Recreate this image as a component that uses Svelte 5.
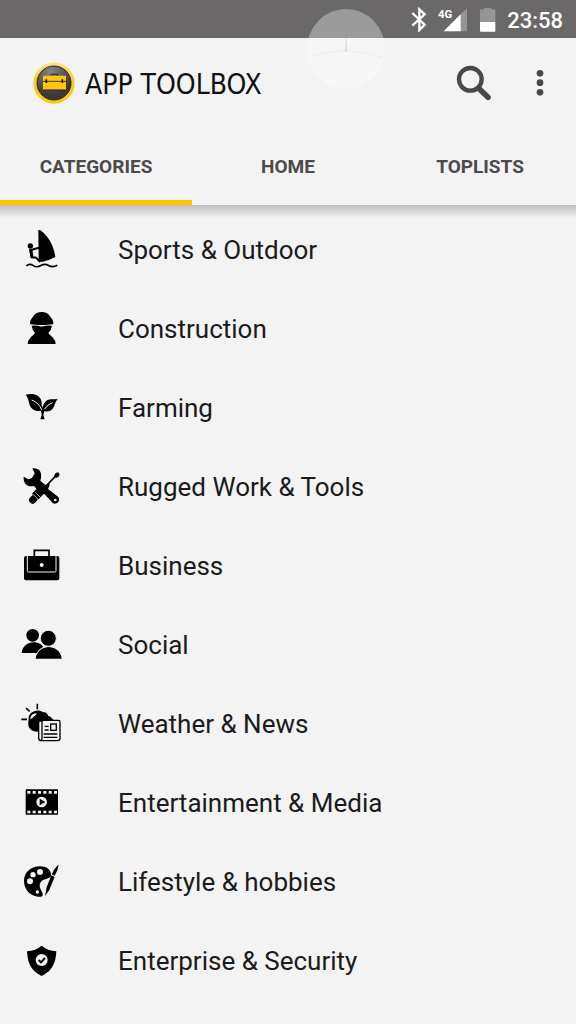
<script lang="ts">
  type Tab = 'categories' | 'home' | 'toplists';

  const tabs: { id: Tab; label: string }[] = [
    { id: 'categories', label: 'CATEGORIES' },
    { id: 'home', label: 'HOME' },
    { id: 'toplists', label: 'TOPLISTS' },
  ];

  const categories = [
    { icon: 'sports', label: 'Sports & Outdoor', box: '0 -3 210 180' },
    { icon: 'construction', label: 'Construction', box: '0 -6 210 180' },
    { icon: 'farming', label: 'Farming', box: '0 -7 210 180' },
    { icon: 'tools', label: 'Rugged Work & Tools', box: '0 230 210 180' },
    { icon: 'business', label: 'Business', box: '0 -12 210 180' },
    { icon: 'social', label: 'Social', box: '0 225 210 180' },
    { icon: 'weather', label: 'Weather & News', box: '0 -3 210 180' },
    { icon: 'media', label: 'Entertainment & Media', box: '0 -20 210 180' },
    { icon: 'lifestyle', label: 'Lifestyle & hobbies', box: '0 218 210 180' },
    { icon: 'security', label: 'Enterprise & Security', box: '0 3 210 180' },
  ];

  let active = $state<Tab>('categories');
</script>

<div class="app">
  <div class="status">
    <svg width="16" height="25" viewBox="366 20 48 75" aria-label="Bluetooth">
      <path d="M370 38l37 35-16 16V27l16 15-37 34" fill="none" stroke="#fff" stroke-width="7" />
    </svg>
    <svg width="30" height="25" viewBox="444 20 90 75" aria-label="Signal">
      <path d="M531 24v69h-70z" fill="#969595" />
      <path d="M512 42v51h-51z" fill="#fff" />
      <text x="444" y="53" class="network">4G</text>
    </svg>
    <svg width="17" height="25" viewBox="567 18 51 75" aria-label="Battery">
      <path d="M570 28q0-3 3-3h9v-4h22v4h9q3 0 3 3v36h-46z" fill="#969595" />
      <path d="M570 63h46v26q0 3-3 3h-40q-3 0-3-3z" fill="#fff" />
    </svg>
    <time>23:58</time>
  </div>

  <div class="touch" aria-hidden="true">
    <svg viewBox="0 0 234 234">
      <path d="M8 144q110-38 218 2" fill="none" stroke="#777" stroke-opacity=".05" stroke-width="5" />
      <path d="M84 95l31 32M151 96l-32 31" fill="none" stroke="#444" stroke-opacity=".07" stroke-width="2" />
      <path d="M115 127l2-57 3 57z" fill="#444" fill-opacity=".2" />
    </svg>
  </div>

  <header>
    <svg class="logo" width="42" height="42" viewBox="99 66 126 126" aria-hidden="true">
      <defs>
        <linearGradient id="ring" x1="0" y1="0" x2="0" y2="1">
          <stop offset="0" stop-color="#ffe28a" />
          <stop offset=".35" stop-color="#fbd03c" />
          <stop offset=".7" stop-color="#ffc60c" />
        </linearGradient>
        <radialGradient id="face" cx=".4" cy=".15" r=".7">
          <stop offset="0" stop-color="#858585" />
          <stop offset="1" stop-color="#3b3838" />
        </radialGradient>
      </defs>
      <circle cx="162" cy="129" r="62" fill="url(#ring)" />
      <circle cx="162" cy="129" r="51" fill="url(#face)" stroke="#2d2920" stroke-width="3" />
      <path d="M153 107v-4h20v4" fill="none" stroke="#222" stroke-width="3" />
      <rect x="129" y="107" width="69" height="43" rx="2" fill="#ffc515" />
      <path d="M129 124h69" stroke="#4a3a0c" stroke-width="3" />
      <path d="M139 118v11M187 118v11" stroke="#221c0c" stroke-width="5" />
      <path d="M131 150h65" stroke="#1e1c1c" stroke-width="3" />
    </svg>
    <h1>APP TOOLBOX</h1>
    <button class="search" aria-label="Search">
      <svg width="36" height="36" viewBox="498 195 108 108">
        <circle cx="541" cy="238" r="34" fill="none" stroke="#484848" stroke-width="13" />
        <path d="M566 265l28 27" stroke="#484848" stroke-width="17" stroke-linecap="round" />
      </svg>
    </button>
    <button class="more" aria-label="More options">
      <svg width="8" height="28" viewBox="740 208 24 84">
        <circle cx="752" cy="221" r="10" />
        <circle cx="752" cy="249" r="10" />
        <circle cx="752" cy="278" r="10" />
      </svg>
    </button>
  </header>

  <nav>
    {#each tabs as tab (tab.id)}
      <button class:active={active === tab.id} onclick={() => (active = tab.id)}>{tab.label}</button>
    {/each}
  </nav>

  <ul>
    {#each categories as category (category.icon)}
      <li>
        <button>
          <svg class="icon" width="70" height="60" viewBox={category.box} aria-hidden="true">
            {#if category.icon === 'sports'}
              <path d="M85 27l6 1c22 15 40 44 45 80q-20 11-41 15l-9-7z" />
              <circle cx="61" cy="75" r="8" />
              <path d="M61 88l4 21 13 1 13 13M63 87l24-7" class="line" stroke-width="6" />
              <path d="M57 84l10 1 3 22-8 2z" />
              <path d="M49 135c8-8 14-6 21-1s15 4 24-1 16-3 23 1 15 4 25-1" class="line" stroke-width="5" />
            {:else if category.icon === 'construction'}
              <path d="M61 70c-3-5 0-14 8-23 6-10 15-14 26-14s20 4 26 14c8 9 11 18 8 23-20 3-48 3-68 0z" />
              <path d="M65 74q16-2 22 1 8 3 16 0 8-3 23-1-2 14-11 22c3 6 10 9 14 14q7 7 8 19H53q1-12 8-19c4-5 11-8 14-14q-8-8-10-22z" />
            {:else if category.icon === 'farming'}
              <path d="M47 43c13-3 27-3 37 4 10 7 12 17 11 28l3 8c3-16 10-25 25-26q10 0 20-1-8 9-11 22c-4 12-17 19-29 14l-3 13 4 12H91l4-12-2-14c-15 5-32-5-35-20-2-11-5-20-11-28z" />
              <path d="M65 59q22 8 30 30M128 67q-15 4-25 20" class="cut" stroke-width="3" />
            {:else if category.icon === 'tools'}
              <path d="M67 264c21-2 29 11 26 29l-2 8 15 13 11-7 2 8-5 11 30 23c6 7 3 16-4 20-7 3-13 0-17-7l-21-22-8 5-8-12-14-16c-20 4-33-8-31-28l14 8 11-4 8-14z" />
              <path d="M103 320L75 349" class="line" stroke-width="26" />
              <path d="M71 356l-3 3" class="line" stroke-width="22" stroke-linecap="round" />
              <path d="M68 341l18 17M75 335l17 17" class="cut" stroke-width="2" />
              <path d="M111 314l28-29" class="line" stroke-width="5" />
              <path d="M132 287l5-9 8-2 4 7-4 7-8 3z" />
              <circle cx="136" cy="359" r="4" class="hole" />
            {:else if category.icon === 'business'}
              <path d="M73 50V31h44v19" class="line" stroke-width="5" />
              <rect x="42" y="48" width="106" height="73" rx="6" />
              <path d="M52 48v44q0 4 4 4h78q4 0 4-4V48" class="cut" stroke-width="3" />
              <circle cx="95" cy="75" r="6" class="hole" />
            {:else if category.icon === 'social'}
              <circle cx="68" cy="286" r="19" />
              <path d="M35 339c3-37 53-43 68-14l-16 14z" />
              <path d="M77 356c4-48 74-48 78 0z" stroke="#f3f3f3" stroke-width="4" />
              <path d="M77 356c4-46 74-46 78 0z" />
              <circle cx="115" cy="295" r="24" stroke="#f3f3f3" stroke-width="3" />
            {:else if category.icon === 'weather'}
              <path d="M82 26v17M48 39l11 10M34 73h17" class="line" stroke-width="5" />
              <path d="M56 75c-4-24 27-36 43-23q12-3 15 10c8 1 12 8 17 13v35H87c-20 2-38-10-31-35z" />
              <path d="M61 72c0-12 10-19 20-16-7 8-12 9-14 14z" class="hole" />
              <path d="M86 78h9v-2h50q5 0 5 5v49q0 7-7 7H93q-7 0-7-7z" class="paper" />
              <path d="M96 78v51q0 5-4 8M104 94h12M104 105h12M101 117h41M101 127h41" class="line" stroke-width="4" />
              <rect x="122" y="87" width="17" height="19" class="paper" />
            {:else if category.icon === 'media'}
              <rect x="47" y="29" width="97" height="76" rx="2" />
              <path d="M52 38h90M52 97h90" class="cut" stroke-width="8" stroke-dasharray="9 7" />
              <circle cx="95" cy="67" r="16" class="hole" />
              <path d="M89 57l17 10-17 10z" />
            {:else if category.icon === 'lifestyle'}
              <path d="M90 261c23 0 36 14 33 30-6 9-23 6-31 18-7 10 0 22 5 31 4 10-3 14-13 12-27-3-42-25-42-47 0-27 22-44 48-44z" />
              <circle cx="90" cy="278" r="9" class="hole" />
              <circle cx="69" cy="286" r="8" class="hole" />
              <circle cx="60" cy="306" r="9" class="hole" />
              <circle cx="82" cy="338" r="5" class="hole" />
              <path d="M105 350l5-26 14-36 10 4-16 40z" />
              <path d="M125 286l7-15 14-16q-1 16-12 34z" />
              <path d="M122 285l14 7" class="cut" stroke-width="2" />
            {:else if category.icon === 'security'}
              <path d="M95 47q18 15 44 17c-2 30-7 56-44 74-37-18-42-44-44-74q26-2 44-17z" />
              <circle cx="95" cy="90" r="18" class="hole" />
              <path d="M86 90l7 7 12-13" class="line" stroke-width="6" />
            {/if}
          </svg>
          <span>{category.label}</span>
        </button>
      </li>
    {/each}
  </ul>
</div>

<style>
  :global(body) {
    margin: 0;
    background: #f3f3f3;
  }
  .app {
    position: relative;
    min-height: 100vh;
    background: #f3f3f3;
    color: #1b1b1b;
    font-family: Roboto, sans-serif;
  }
  button {
    border: 0;
    padding: 0;
    background: transparent;
    color: inherit;
    font: inherit;
    cursor: pointer;
  }
  svg {
    display: block;
    flex: none;
  }
  .status {
    display: flex;
    align-items: center;
    justify-content: flex-end;
    gap: 11px;
    height: 38px;
    padding-right: 13px;
    background: #6a6868;
    color: #fff;
  }
  .status time {
    padding-top: 3px;
    font-size: 22px;
    font-weight: 500;
    line-height: 35px;
  }
  .network {
    fill: #fff;
    font-size: 34px;
    font-weight: 700;
  }
  .touch {
    position: absolute;
    top: 9px;
    left: 60%;
    width: 78px;
    height: 80px;
    border-radius: 50%;
    background: rgba(255, 255, 255, 0.34);
    transform: translateX(-50%);
    pointer-events: none;
  }
  header {
    display: flex;
    align-items: center;
    height: 90px;
    padding: 0 32px 0 33px;
  }
  h1 {
    flex: 1;
    margin: 0 0 0 10px;
    padding-top: 3px;
    color: #111;
    font-family: 'DejaVu Sans Condensed', 'DejaVu Sans', sans-serif;
    font-size: 28px;
    font-weight: 400;
    line-height: 36px;
    white-space: nowrap;
  }
  .search {
    margin-right: 44px;
  }
  .more {
    fill: #484848;
  }
  nav {
    position: relative;
    display: grid;
    grid-template-columns: repeat(3, 1fr);
    height: 77px;
  }
  nav::after {
    content: '';
    position: absolute;
    top: 100%;
    left: 0;
    right: 0;
    height: 13px;
    background: linear-gradient(#bebebe, #dadada 50%, #f3f3f3);
    pointer-events: none;
  }
  nav button {
    border-bottom: 5px solid transparent;
    padding-top: 5px;
    color: #4b4b4b;
    font-size: 19px;
    font-weight: 700;
  }
  nav button.active {
    border-color: #ffc400;
  }
  ul {
    margin: 0;
    padding: 5px 0 0;
    list-style: none;
  }
  li button {
    display: flex;
    align-items: center;
    gap: 38px;
    width: 100%;
    height: 79px;
    padding-left: 10px;
    font-size: 26px;
    line-height: 32px;
    text-align: left;
  }
  .icon .line {
    fill: none;
    stroke: #000;
  }
  .icon .cut {
    fill: none;
    stroke: #f3f3f3;
  }
  .icon .hole {
    fill: #f3f3f3;
  }
  .icon .paper {
    fill: #f3f3f3;
    stroke: #000;
    stroke-width: 4;
  }
</style>
